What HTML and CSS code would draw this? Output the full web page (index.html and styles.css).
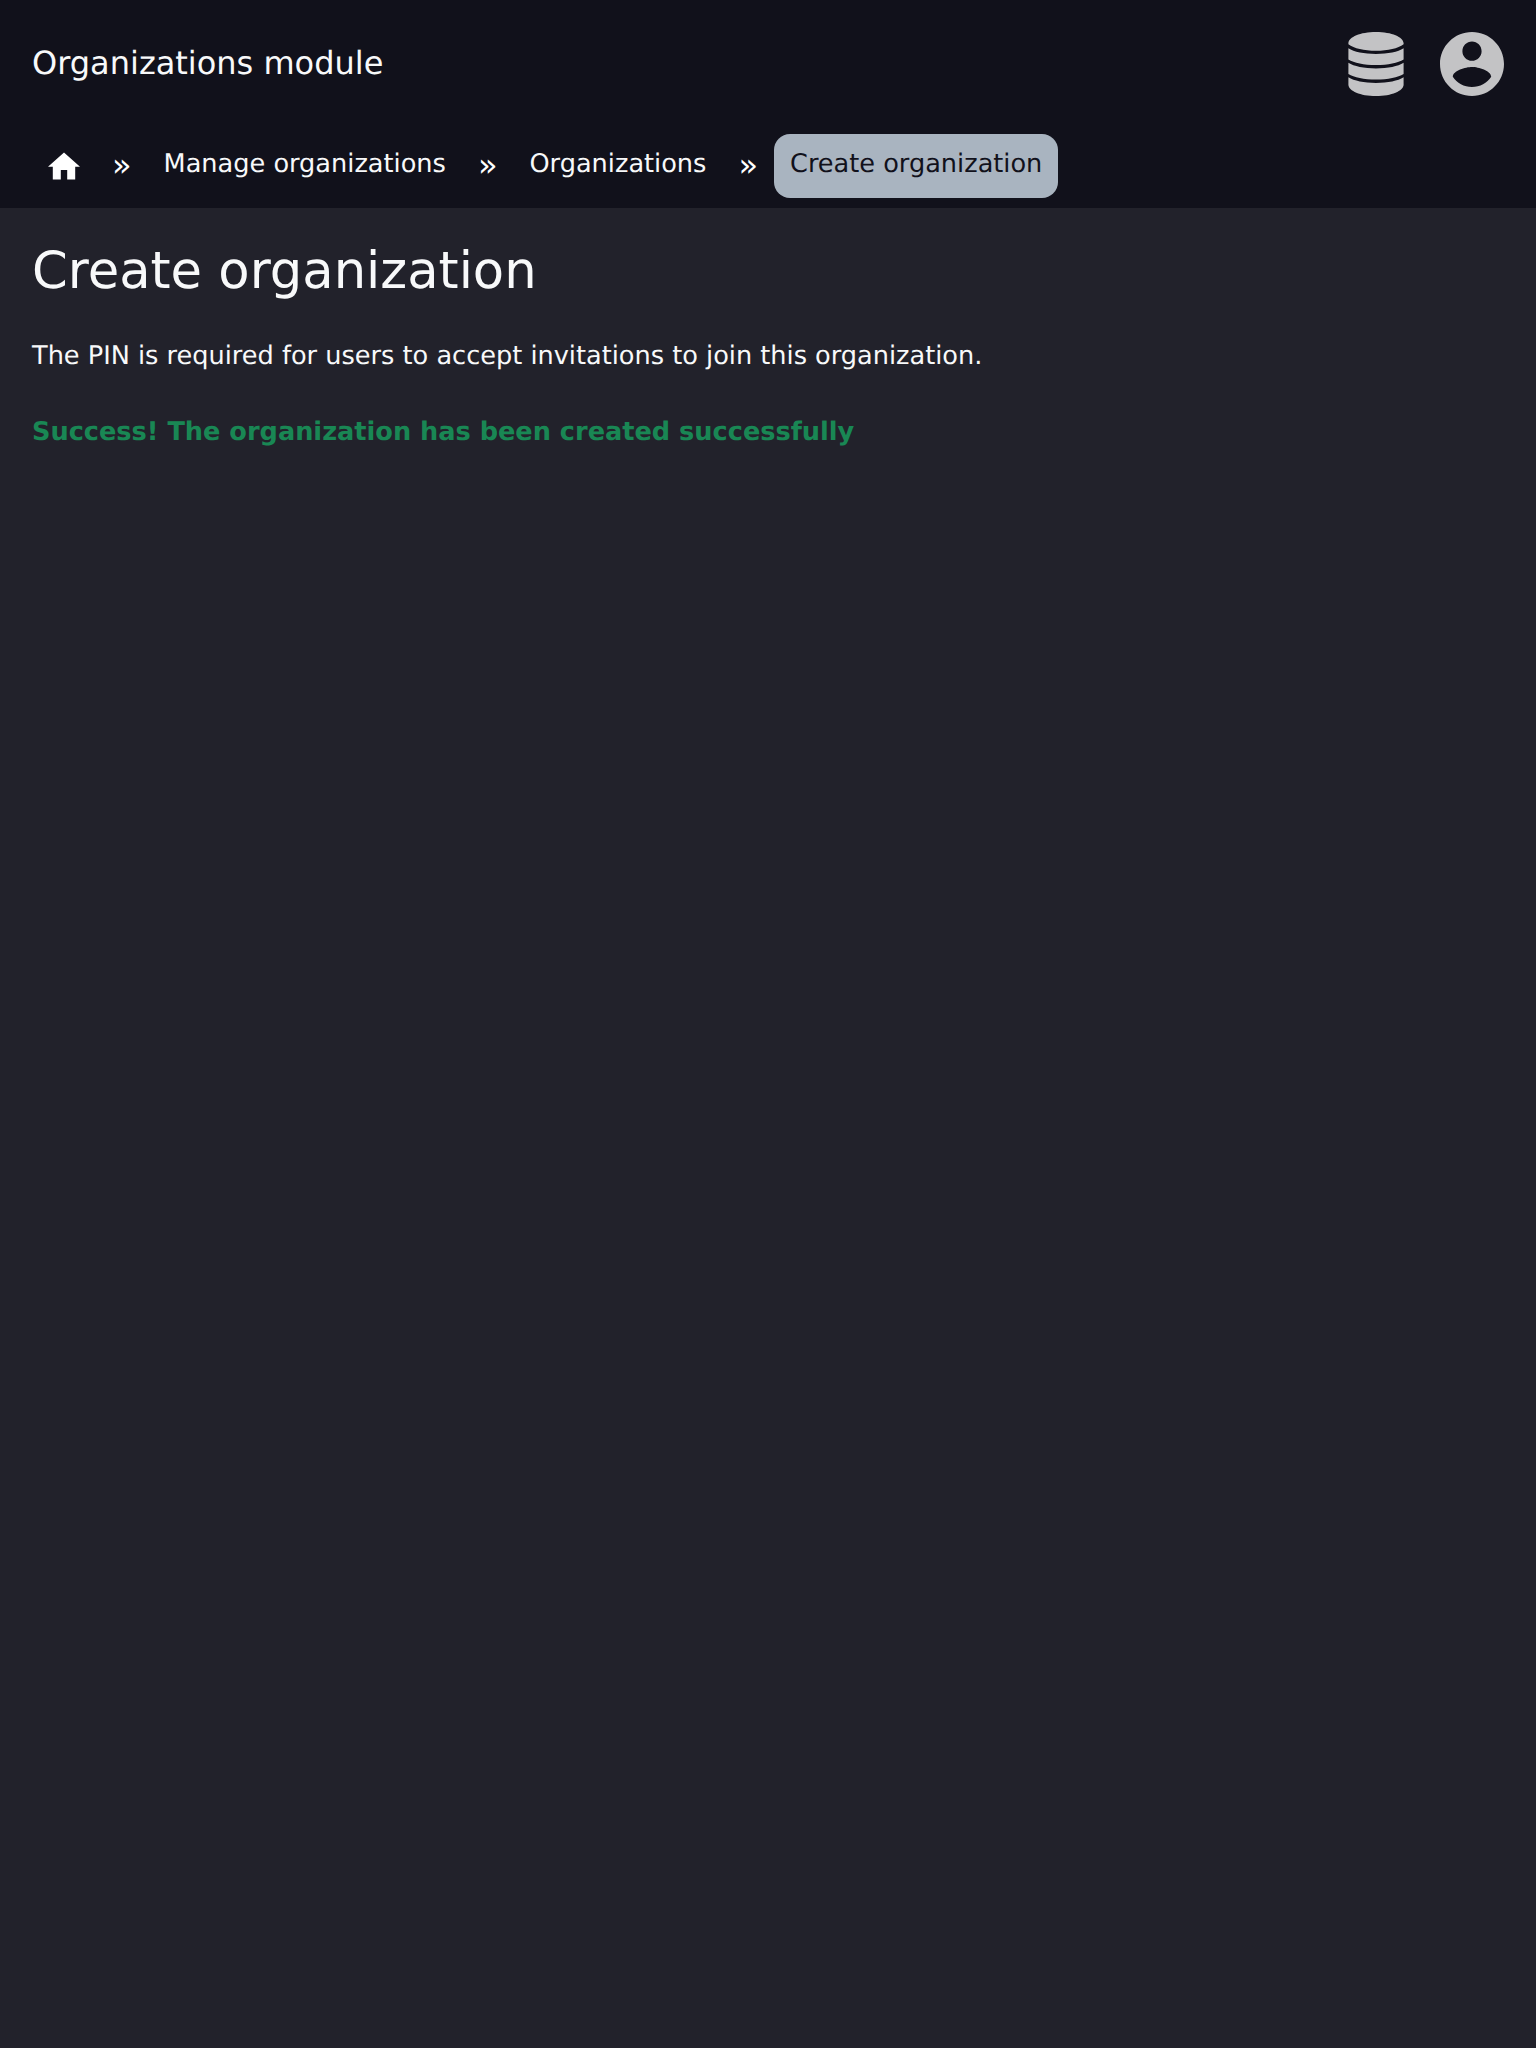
FILE: index.html
```html
<!DOCTYPE html>
<html lang="en">
<head>
<meta charset="utf-8">
<title>Create organization</title>
<link rel="stylesheet" href="styles.css">
</head>
<body>
<header class="header">
  <div class="topbar">
    <span class="brand">Organizations module</span>
    <div class="actions">
      <svg class="icon-db" viewBox="0 0 56 64"><path d="M.4 11C1 5 12 0 28 0s27 5 27.600 11v1.300C50 16.500 40 18.800 28 18.800S6 16.500.4 12.300zM.4 16.300C6 19.900 16 22 28 22s22-2.100 27.600-5.700v11.200C50 31 40 33 28 33S6 31 .4 27.500zM.4 30.800C6 34.400 16 36.400 28 36.400s22-2 27.600-5.600v11.200C50 45.500 40 47.500 28 47.500S6 45.500.4 42zM.4 45.300C6 48.900 16 50.900 28 50.900s22-2 27.600-5.600v7.700C55 59 44 64 28 64S1 59 .4 53z"/></svg>
      <svg class="icon-user" viewBox="2 2 20 20"><path d="M12 2C6.480 2 2 6.480 2 12s4.480 10 10 10 10-4.480 10-10S17.520 2 12 2zm0 3c1.660 0 3 1.340 3 3s-1.340 3-3 3-3-1.340-3-3 1.340-3 3-3zm0 14.200c-2.500 0-4.710-1.280-6-3.220.03-1.990 4-3.080 6-3.080 1.990 0 5.970 1.090 6 3.080-1.290 1.940-3.500 3.220-6 3.220z"/></svg>
    </div>
  </div>
  <nav class="crumbs">
    <a class="crumb home"><svg class="icon-home" viewBox="2 3 20 17"><path d="M10 20v-6h4v6h5v-8h3L12 3 2 12h3v8z"/></svg></a>
    <span class="sep">»</span>
    <a class="crumb">Manage organizations</a>
    <span class="sep">»</span>
    <a class="crumb">Organizations</a>
    <span class="sep">»</span>
    <a class="crumb current">Create organization</a>
  </nav>
</header>
<main class="content">
  <h1 class="title">Create organization</h1>
  <p class="text">The PIN is required for users to accept invitations to join this organization.</p>
  <p class="text success">Success! The organization has been created successfully</p>
</main>
</body>
</html>
```
FILE: styles.css
```css
body {
  margin: 0;
  min-height: 2048px;
  background: #22222b;
  color: #f8f9fa;
  font: 25.6px/38.4px "DejaVu Sans", sans-serif;
  text-rendering: geometricPrecision;
}
.header { background: #11111b; height: 208px; }
.topbar {
  display: flex;
  align-items: center;
  justify-content: space-between;
  height: 128px;
  padding: 0 32px;
}
.brand { font-size: 32px; line-height: 48px; padding-bottom: 2px; }
.actions { display: flex; gap: 36px; fill: #c3c3c5; }
.icon-db { width: 56px; height: 64px; }
.icon-user { width: 64px; height: 64px; }
.crumbs {
  display: flex;
  padding: 6px 32px 0;
}
.crumb {
  box-sizing: border-box;
  height: 64px;
  padding: 10.6px 16px;
  border-radius: 16px;
}
.home { padding-top: 18px; }
.icon-home { display: block; width: 32px; height: 28px; fill: #fff; }
.sep {
  width: 51.6px;
  line-height: 62px;
  text-align: center;
  font-size: 32px;
  color: #fff;
}
.current { background: #a9b4c0; color: #11111b; }
.content { padding: 33px 32px; }
.title { margin: 0 0 35px; font-size: 51.2px; line-height: 61.4px; font-weight: 400; }
.text { margin: 0 0 37.6px; }
.success { color: #198754; font-weight: 700; }
```
